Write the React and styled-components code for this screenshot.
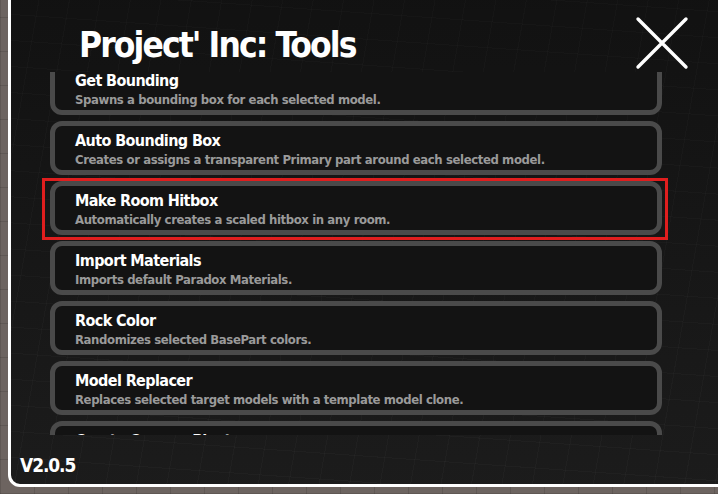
import { useLayoutEffect, useRef } from "react";
import styled, { createGlobalStyle } from "styled-components";

const tools = [
  { name: "Get Bounding", desc: "Spawns a bounding box for each selected model." },
  { name: "Auto Bounding Box", desc: "Creates or assigns a transparent Primary part around each selected model." },
  { name: "Make Room Hitbox", desc: "Automatically creates a scaled hitbox in any room.", selected: true },
  { name: "Import Materials", desc: "Imports default Paradox Materials." },
  { name: "Rock Color", desc: "Randomizes selected BasePart colors." },
  { name: "Model Replacer", desc: "Replaces selected target models with a template model clone." },
  { name: "Create Camera Pivot", desc: "Creates a camera pivot at the selected part." },
];

const GlobalStyle = createGlobalStyle`
  html, body {
    margin: 0;
    padding: 0;
    height: 100%;
    overflow: hidden;
  }
  body {
    background-color: #6d6460;
    background-image:
      repeating-linear-gradient(90deg, rgba(0,0,0,0.12) 0 1px, transparent 1px 34px),
      repeating-linear-gradient(0deg, rgba(0,0,0,0.12) 0 1px, transparent 1px 34px);
    font-family: "DejaVu Sans Condensed", "DejaVu Sans", sans-serif;
  }
`;

const Panel = styled.div`
  box-sizing: border-box;
  margin: -20px 0 0 8px;
  width: 740px;
  height: 507px;
  border: 3px solid #ffffff;
  border-radius: 12px;
  background-color: #171717;
  background-image:
    linear-gradient(180deg, rgba(0,0,0,0.25) 0%, rgba(255,255,255,0.02) 100%),
    repeating-linear-gradient(100deg, rgba(255,255,255,0.025) 0 1px, transparent 1px 30px),
    repeating-linear-gradient(4deg, rgba(255,255,255,0.025) 0 1px, transparent 1px 26px);
  display: flex;
  flex-direction: column;
  overflow: hidden;
`;

const Header = styled.div`
  box-sizing: border-box;
  display: flex;
  align-items: flex-start;
  justify-content: space-between;
  height: 89px;
  padding: 20px 56px 0 68px;
  flex-shrink: 0;
`;

const Title = styled.h1`
  margin: 0;
  padding-top: 25px;
  color: #ffffff;
  font-size: 35px;
  font-weight: 700;
  letter-spacing: -1.9px;
  line-height: 1;
  white-space: nowrap;
`;

const CloseButton = styled.button`
  width: 54px;
  height: 54px;
  padding: 0;
  margin-top: 13px;
  border: none;
  background: none;
  cursor: pointer;
  display: flex;
  align-items: center;
  justify-content: center;
`;

const List = styled.div`
  height: 363px;
  margin: 0 73px 0 29px;
  padding: 0 10px;
  overflow-y: auto;
  scrollbar-width: none;
  display: flex;
  flex-direction: column;
  gap: 6px;
  flex-shrink: 0;
  &::-webkit-scrollbar {
    display: none;
  }
`;

const Card = styled.div`
  position: relative;
  box-sizing: border-box;
  flex-shrink: 0;
  height: 54px;
  border: 5px solid #4a4a4a;
  border-radius: 12px;
  background: #131313;
  padding: 5px 0 0 20px;
  display: flex;
  flex-direction: column;
  &::after {
    content: "";
    display: ${(p) => (p.$selected ? "block" : "none")};
    position: absolute;
    top: -8px;
    bottom: -10px;
    left: -13px;
    right: -11px;
    border: 3px solid #e01e1e;
  }
`;

const CardTitle = styled.div`
  color: #ffffff;
  font-size: 16px;
  font-weight: 700;
  letter-spacing: -0.6px;
  line-height: 19px;
  white-space: nowrap;
`;

const CardDesc = styled.div`
  margin-top: 2px;
  color: #9a9a9a;
  font-size: 13px;
  font-weight: 700;
  letter-spacing: -0.4px;
  line-height: 15px;
  white-space: nowrap;
`;

const Footer = styled.div`
  flex: 1;
  display: flex;
  align-items: center;
  padding: 10px 0 0 9px;
  color: #ffffff;
  font-size: 19px;
  font-weight: 700;
  letter-spacing: -1.1px;
`;

const CloseIcon = () => (
  <svg width="54" height="54" viewBox="0 0 54 54">
    <path d="M3 3 L51 51 M51 3 L3 51" stroke="#ffffff" strokeWidth="3.4" strokeLinecap="round" />
  </svg>
);

export default function App() {
  const listRef = useRef(null);

  useLayoutEffect(() => {
    if (listRef.current) listRef.current.scrollTop = 11;
  }, []);

  return (
    <>
      <GlobalStyle />
      <Panel>
        <Header>
          <Title>Project' Inc: Tools</Title>
          <CloseButton aria-label="Close">
            <CloseIcon />
          </CloseButton>
        </Header>
        <List ref={listRef}>
          {tools.map((t) => (
            <Card key={t.name} $selected={t.selected}>
              <CardTitle>{t.name}</CardTitle>
              <CardDesc>{t.desc}</CardDesc>
            </Card>
          ))}
          <div style={{ height: 10, flexShrink: 0 }} />
        </List>
        <Footer>V2.0.5</Footer>
      </Panel>
    </>
  );
}
